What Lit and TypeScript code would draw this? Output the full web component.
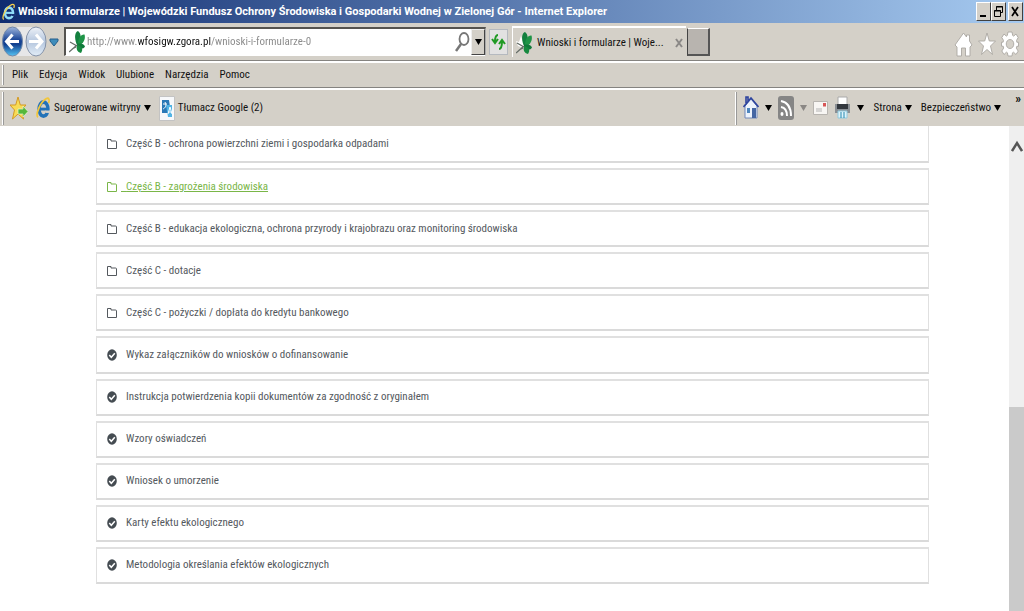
import { LitElement, html, css, svg } from "lit";
import { customElement } from "lit/decorators.js";
import { classMap } from "lit/directives/class-map.js";

interface Entry {
  text: string;
  kind: "folder" | "check";
  active?: boolean;
}

const entries: Entry[] = [
  { text: "Część B - ochrona powierzchni ziemi i gospodarka odpadami", kind: "folder" },
  { text: "Część B - zagrożenia środowiska", kind: "folder", active: true },
  { text: "Część B - edukacja ekologiczna, ochrona przyrody i krajobrazu oraz monitoring środowiska", kind: "folder" },
  { text: "Część C - dotacje", kind: "folder" },
  { text: "Część C - pożyczki / dopłata do kredytu bankowego", kind: "folder" },
  { text: "Wykaz załączników do wniosków o dofinansowanie", kind: "check" },
  { text: "Instrukcja potwierdzenia kopii dokumentów za zgodność z oryginałem", kind: "check" },
  { text: "Wzory oświadczeń", kind: "check" },
  { text: "Wniosek o umorzenie", kind: "check" },
  { text: "Karty efektu ekologicznego", kind: "check" },
  { text: "Metodologia określania efektów ekologicznych", kind: "check" },
];

const folderIcon = html`<svg width="10" height="12" viewBox="0 0 10 12" fill="none" stroke="currentColor">
  <path d="M.5 10.500v-9h3.500v1.500h4.500q1 0 1 1v6.500z" /></svg>`;
const checkIcon = html`<svg width="10" height="12" viewBox="0 0 10 12">
  <ellipse cx="5" cy="6" rx="4.800" ry="5.800" fill="#454c52" />
  <path d="M2.300 6l2 2.300 3.500-4" fill="none" stroke="#fff" stroke-width="1.500" /></svg>`;
const ieShape = svg`
  <ellipse cx="8" cy="11" rx="4.800" ry="6.400" fill="none" stroke="#2272b8" stroke-width="3.600" />
  <path d="M4 11h9" stroke="#2272b8" stroke-width="2.600" />
  <path d="M10 12.300h6v2.200h-6z" fill="#d4d0c8" />
  <path d="M2 18.500C-1 16 5 4 11 1.500c3-1 3.500 1 2.500 4" fill="none" stroke="#f2c63a" stroke-width="1.800" />`;
const ieTitle = html`<svg width="14" height="20" viewBox="0 0 16 20">
  <ellipse cx="8" cy="11" rx="4.600" ry="6" fill="none" stroke="#8fdcf8" stroke-width="3" />
  <path d="M4 11h9" stroke="#8fdcf8" stroke-width="2.400" />
  <path d="M10 12.300h6v2.200h-5z" fill="#173579" />
  <path d="M2 18.500C-1 16 5 4 11 1.500c3-1 3.500 1 2.500 4" fill="none" stroke="#f4cf4d" stroke-width="1.500" /></svg>`;
const leafIcon = html`<svg width="16" height="24" viewBox="0 0 16 24">
  <path d="M8 14L5 5 3 11 0 10l2 5 6 2z" fill="#fff" />
  <path d="M7.500 14C5 7 6 2 9 1c3 2 3.500 7 1.500 13z" fill="#14803f" />
  <path d="M9 14c0-6 3-10 6.500-9.500C17 9 14 14 10 15.500z" fill="#1f9447" />
  <path d="M8 14c4-1 7 0 8 2.500-1.500 3-6 3-8 0z" fill="#0f7a3a" />
  <path d="M8 15c6 1 6 5 4 8-4-1-5-4-4-8z" fill="#17893f" />
  <path d="M0 22l8-7M1 12l7 4M3 19l4-2" fill="none" stroke="#646c66" stroke-width="1.300" /></svg>`;

@customElement("app-root")
export class AppRoot extends LitElement {
  static styles = css`
    :host {
      display: flex;
      flex-direction: column;
      min-height: 100vh;
      background: #fff;
      color: #111;
      font: 11px/18px "Roboto Condensed", "Liberation Sans", Arial, sans-serif;
    }
    * { box-sizing: border-box; }
    svg { display: block; flex: none; }
    button {
      display: flex;
      align-items: center;
      gap: 3px;
      margin: 0;
      padding: 0;
      border: 0;
      background: none;
      color: inherit;
      font: inherit;
      white-space: nowrap;
    }
    .title {
      display: flex;
      align-items: center;
      height: 23px;
      padding: 0 1px 0 2px;
      gap: 2px;
      background: linear-gradient(90deg, #0f2c70, #a6caf0);
      color: #fff;
      font-family: Roboto, "Liberation Sans", sans-serif;
      font-weight: bold;
    }
    .title h1 { flex: 1; margin: 0; font: inherit; white-space: nowrap; overflow: hidden; }
    .window { display: flex; }
    .window button {
      width: 15px;
      height: 19px;
      justify-content: center;
      background: #d4d0c8;
      border: 1px solid;
      border-color: #fff #404040 #404040 #fff;
    }
    .window .close { margin-left: 2px; }
    .nav {
      display: flex;
      align-items: center;
      height: 38px;
      padding: 0 5px 0 2px;
      background: #d4d0c8;
      border-bottom: 1px solid #858380;
    }
    .address {
      display: flex;
      align-items: center;
      width: 422px;
      height: 29px;
      margin-left: 5px;
      padding-left: 3px;
      background: #fff;
      border: 1px solid;
      border-width: 2px 1px 1px 2px;
      border-color: #55534f #aaa #fff #55534f;
    }
    .url {
      flex: 1;
      min-width: 0;
      margin: 0 0 0 2px;
      padding: 0;
      border: 0;
      outline: none;
      font: inherit;
      color: transparent;
      background: linear-gradient(90deg, #888 51px, #111 51px, #111 124px, #888 124px);
      -webkit-background-clip: text;
      background-clip: text;
    }
    .drop {
      width: 14px;
      height: 26px;
      margin-left: 1px;
      justify-content: center;
      background: #d4d0c8;
      border: 1px solid;
      border-color: #eee #444 #444 #eee;
    }
    .refresh {
      width: 19px;
      height: 26px;
      margin-left: 3px;
      justify-content: center;
      background: #e2e1e1;
      border: 1px solid #b5b9bf;
    }
    .tab {
      display: flex;
      align-items: center;
      width: 174px;
      height: 31px;
      margin-left: 4px;
      padding: 0 3px;
      gap: 5px;
      border-top: 2px solid #fff;
      border-left: 1px solid #fff;
    }
    .tab span { flex: 1; white-space: nowrap; }
    .new {
      width: 23px;
      height: 28px;
      margin-left: 1px;
      background: #b8b4af;
      border: 1px solid;
      border-width: 1px 2px 2px 1px;
      border-color: #fff #555 #555 #444;
    }
    .tools { display: flex; align-items: center; gap: 5px; margin: 5px 0 0 auto; }
    .menu {
      display: flex;
      align-items: center;
      height: 27px;
      padding-left: 2px;
      gap: 11px;
      background: #d4d0c8;
      border-top: 2px solid #fff;
      border-bottom: 1px solid #858380;
    }
    .grip { width: 2px; height: 20px; margin-right: -3px; border-left: 1px solid #fff; border-right: 1px solid #999; }
    .favorites {
      display: flex;
      align-items: center;
      height: 38px;
      padding-left: 2px;
      background: #d4d0c8;
      border-top: 2px solid #fff;
    }
    .favorites .grip { height: 33px; margin: 0; }
    .links { display: flex; align-items: center; gap: 8px; margin-left: 6px; flex: 1; }
    .command { display: flex; align-items: center; gap: 6px; }
    .words { display: flex; gap: 9px; margin-left: 3px; }
    .more { align-self: flex-start; margin: 0 3px 0 8px; font-size: 13px; line-height: 14px; font-weight: bold; }
    .page { display: flex; flex: 1; }
    .list {
      display: flex;
      flex-direction: column;
      flex: 1;
      gap: 5px;
      margin: 0 80px 27px 96px;
      padding: 0;
      list-style: none;
    }
    .item {
      display: flex;
      flex: 1 0 36px;
      align-items: center;
      padding-left: 10px;
      border: 1px solid #e0e0e0;
      border-top: 2px solid #e0e0e0;
      border-bottom: 2px solid #dadada;
    }
    .item:first-child { border-top: 0; }
    .item a { display: flex; align-items: center; gap: 9px; color: #54595e; text-decoration: none; white-space: pre; }
    .item.active a { gap: 4px; color: #7ab648; }
    .item.active span { text-decoration: underline; }
    .scroll { width: 15px; background: #efefef; display: flex; flex-direction: column; }
    .scroll svg { margin: 14px 0 0 2px; }
    .thumb { margin-top: auto; height: 42%; background: #cacaca; }
  `;

  private arrow(color = "#000") {
    return html`<svg width="7" height="6" viewBox="0 0 7 6"><path d="M0 0h7L3.500 6z" fill=${color} /></svg>`;
  }

  private renderTitle() {
    return html`<header class="title">
      ${ieTitle}
      <h1>Wnioski i formularze | Wojewódzki Fundusz Ochrony Środowiska i Gospodarki Wodnej w Zielonej Gór - Internet Explorer</h1>
      <div class="window">
        <button aria-label="Minimalizuj"><svg width="9" height="13"><path d="M1 11h6" stroke="#000" stroke-width="2" /></svg></button>
        <button aria-label="Przywróć"><svg width="9" height="13" fill="none" stroke="#000"><path d="M2.500 5V1.500h6v6H7M2 2h7M.5 5.500h6v6h-6zM0 6h7" /></svg></button>
        <button class="close" aria-label="Zamknij"><svg width="9" height="13"><path d="M1 2l6 9M7 2l-6 9" stroke="#000" stroke-width="1.700" /></svg></button>
      </div>
    </header>`;
  }

  private renderNav() {
    return html`<nav class="nav">
      <svg width="57" height="34" viewBox="0 0 57 34">
        <defs>
          <linearGradient id="blue" x2="0" y2="1"><stop stop-color="#9db4dc" /><stop offset=".45" stop-color="#1b4596" /><stop offset=".6" stop-color="#12408f" /><stop offset="1" stop-color="#55c4f4" /></linearGradient>
          <linearGradient id="pale" x2="0" y2="1"><stop stop-color="#eef2f8" /><stop offset=".5" stop-color="#b5c6de" /><stop offset="1" stop-color="#e2edf7" /></linearGradient>
        </defs>
        <path d="M10 2h26v29H10z" fill="#e7e7e8" />
        <ellipse cx="10.500" cy="16.500" rx="10" ry="14.500" fill="url(#blue)" stroke="#7288a8" />
        <ellipse cx="34" cy="16.500" rx="10" ry="14.500" fill="url(#pale)" stroke="#8492a8" />
        <path d="M17 16.500H5M10.500 9.500l-6 7 6 7" fill="none" stroke="#fff" stroke-width="3" />
        <path d="M27 16.500h12M34 9.500l6 7-6 7" fill="none" stroke="#fff" stroke-width="3" />
        <path d="M48 14h8v2l-4 5-4-5z" fill="#3f8dbb" stroke="#265f8c" />
      </svg>
      <div class="address">
        ${leafIcon}
        <input class="url" type="text" aria-label="Adres" spellcheck="false" value="http://www.wfosigw.zgora.pl/wnioski-i-formularze-0" />
        <svg width="15" height="22" viewBox="0 0 15 22" fill="none" stroke="#777"><ellipse cx="9" cy="8" rx="4.500" ry="6" stroke-width="1.800" /><path d="M6 13l-5 7" stroke-width="2.500" /></svg>
        <button class="drop" aria-label="Pokaż adresy">${this.arrow()}</button>
      </div>
      <button class="refresh" aria-label="Odśwież"><svg width="15" height="18" viewBox="0 0 15 18" fill="none" stroke="#219a24" stroke-width="2"><path d="M7 2Q4 2 4 9M1 6l3 4 3-4M8 16q3 0 3-8M8 11l3-4 3 4" /></svg></button>
      <div class="tab">${leafIcon}<span>Wnioski i formularze | Woje...</span>
        <button aria-label="Zamknij kartę"><svg width="8" height="10"><path d="M1 1l6 8M7 1l-6 8" stroke="#8a8886" stroke-width="2" /></svg></button>
      </div>
      <button class="new" aria-label="Nowa karta"></button>
      <div class="tools">
        <button aria-label="Strona główna"><svg width="19" height="25" viewBox="0 0 19 25"><path d="M1 13L9.500 1l3 4V3h3v6L18 13l-2 2v9h-4.500v-8h-4v8H3v-9z" fill="#fff" stroke="#aaa7a2" stroke-width=".9" /></svg></button>
        <button aria-label="Ulubione"><svg width="18" height="24" viewBox="0 0 18 24"><path d="M9 1l2.300 8H17.500l-5 5 2 8.500L9 17.500 3.500 22.500l2-8.500-5-5h6.200z" fill="#fff" stroke="#aaa7a2" stroke-width=".9" /></svg></button>
        <button aria-label="Narzędzia"><svg width="18" height="26" viewBox="0 0 18 26"><path d="M7 1h4l.7 3.500 1 .6L15 3l2.200 3.500L15.500 9.500l.4 1.800H17.500v4h-1.700l-.5 1.800 1.900 3L15 23.500l-2.500-2.300-1 .6L11 25H7l-.6-3.200-1-.6L3 23.500.8 20l1.900-3-.5-1.800H.5v-4h1.600l.4-1.800L.8 6.500 3 3l2.300 2.100 1-.6zM9 8.500c-5 0-5 9 0 9s5-9 0-9z" fill="#fff" fill-rule="evenodd" stroke="#aaa7a2" stroke-width=".9" /></svg></button>
      </div>
    </nav>`;
  }

  private renderFavorites() {
    return html`<div class="favorites">
      <i class="grip"></i>
      <div class="links">
        <button aria-label="Dodaj do ulubionych"><svg width="18" height="24" viewBox="0 0 18 24"><path d="M8 1l2.300 8H16l-4.500 5 2 9L8 18l-5.500 5 2-9L0 9h5.700z" fill="#f8dc55" stroke="#d49a24" /><path d="M8 13h5v-3l5 5.500-5 5.500v-3H8z" fill="#55b83b" stroke="#e9f6d9" stroke-width=".7" /></svg></button>
        <button><svg width="15" height="22" viewBox="0 0 16 20" preserveAspectRatio="none">${ieShape}</svg>Sugerowane witryny ${this.arrow()}</button>
        <button><svg width="16" height="25" viewBox="0 0 16 25"><path d="M.5.5h15v24H.5z" fill="#f7f8fa" stroke="#c3c3c3" /><path d="M3 4h7l2 13H3z" fill="#2b78b6" /><path d="M7 9h6v12H9z" fill="#51b3e4" /><path d="M4 8h4M6 6c2 4 0 6-2 7M9 18l2-7 2 7M9.500 16h3" fill="none" stroke="#fff" /></svg>Tłumacz Google (2)</button>
      </div>
      <div class="command">
        <i class="grip"></i>
        <button aria-label="Strona główna"><svg width="16" height="24" viewBox="0 0 16 24"><path d="M2 10v12h12V10L8 3z" fill="#edf3fc" stroke="#7187b8" /><path d="M.5 11L8 2l7.500 9M3 7V1h2v4" fill="none" stroke="#2d439e" stroke-width="1.600" /><path d="M4 12h3v5H4z" fill="#4e86bf" /><path d="M9 12h4v10H9z" fill="#4566a3" /></svg></button>
        ${this.arrow()}
        <button aria-label="Kanały"><svg width="16" height="24" viewBox="0 0 16 24"><rect width="16" height="24" rx="3" fill="#858585" /><path d="M3 5q10 2 10 15M3 11q6 1 6 9" fill="none" stroke="#fff" stroke-width="2" /><ellipse cx="4" cy="18" rx="1.500" ry="2" fill="#fff" /></svg></button>
        ${this.arrow("#8a8784")}
        <button aria-label="Poczta"><svg width="15" height="15" viewBox="0 0 15 15"><path d="M.5.5h14v13H.5z" fill="#f8f6f3" stroke="#b8b5b0" /><path d="M10 2h3v3.500h-3z" fill="#d75656" /><path d="M3 8h6M3 10h6" stroke="#b4b4b4" /></svg></button>
        <button aria-label="Drukuj"><svg width="17" height="24" viewBox="0 0 17 24"><path d="M4 1h9v9H4z" fill="#fff" stroke="#aaa" /><path d="M1 8h15v9H1z" fill="#8a8f94" /><path d="M3 8h11v5H3z" fill="#33383e" /><path d="M4 15h9v7H4z" fill="#def3fb" stroke="#8ec9de" /><path d="M7 16v6M10 16v6" stroke="#2487ae" /></svg></button>
        ${this.arrow()}
        <div class="words"><button>Strona ${this.arrow()}</button><button>Bezpieczeństwo ${this.arrow()}</button></div>
        <button class="more" aria-label="Więcej">»</button>
      </div>
    </div>`;
  }

  render() {
    return html`
      ${this.renderTitle()} ${this.renderNav()}
      <nav class="menu"><i class="grip"></i>
        ${["Plik", "Edycja", "Widok", "Ulubione", "Narzędzia", "Pomoc"].map((t) => html`<button>${t}</button>`)}
      </nav>
      ${this.renderFavorites()}
      <main class="page">
        <ul class="list">
          ${entries.map((e) => html`<li class=${classMap({ item: true, active: !!e.active })}>
            <a href="#">${e.kind === "folder" ? folderIcon : checkIcon}<span>${e.active ? "\u00a0\u00a0" : ""}${e.text}</span></a>
          </li>`)}
        </ul>
        <div class="scroll">
          <svg width="12" height="14" viewBox="0 0 12 14"><path d="M1 11l5-8 5 8" fill="none" stroke="#555" stroke-width="2.500" /></svg>
          <div class="thumb"></div>
        </div>
      </main>`;
  }
}
